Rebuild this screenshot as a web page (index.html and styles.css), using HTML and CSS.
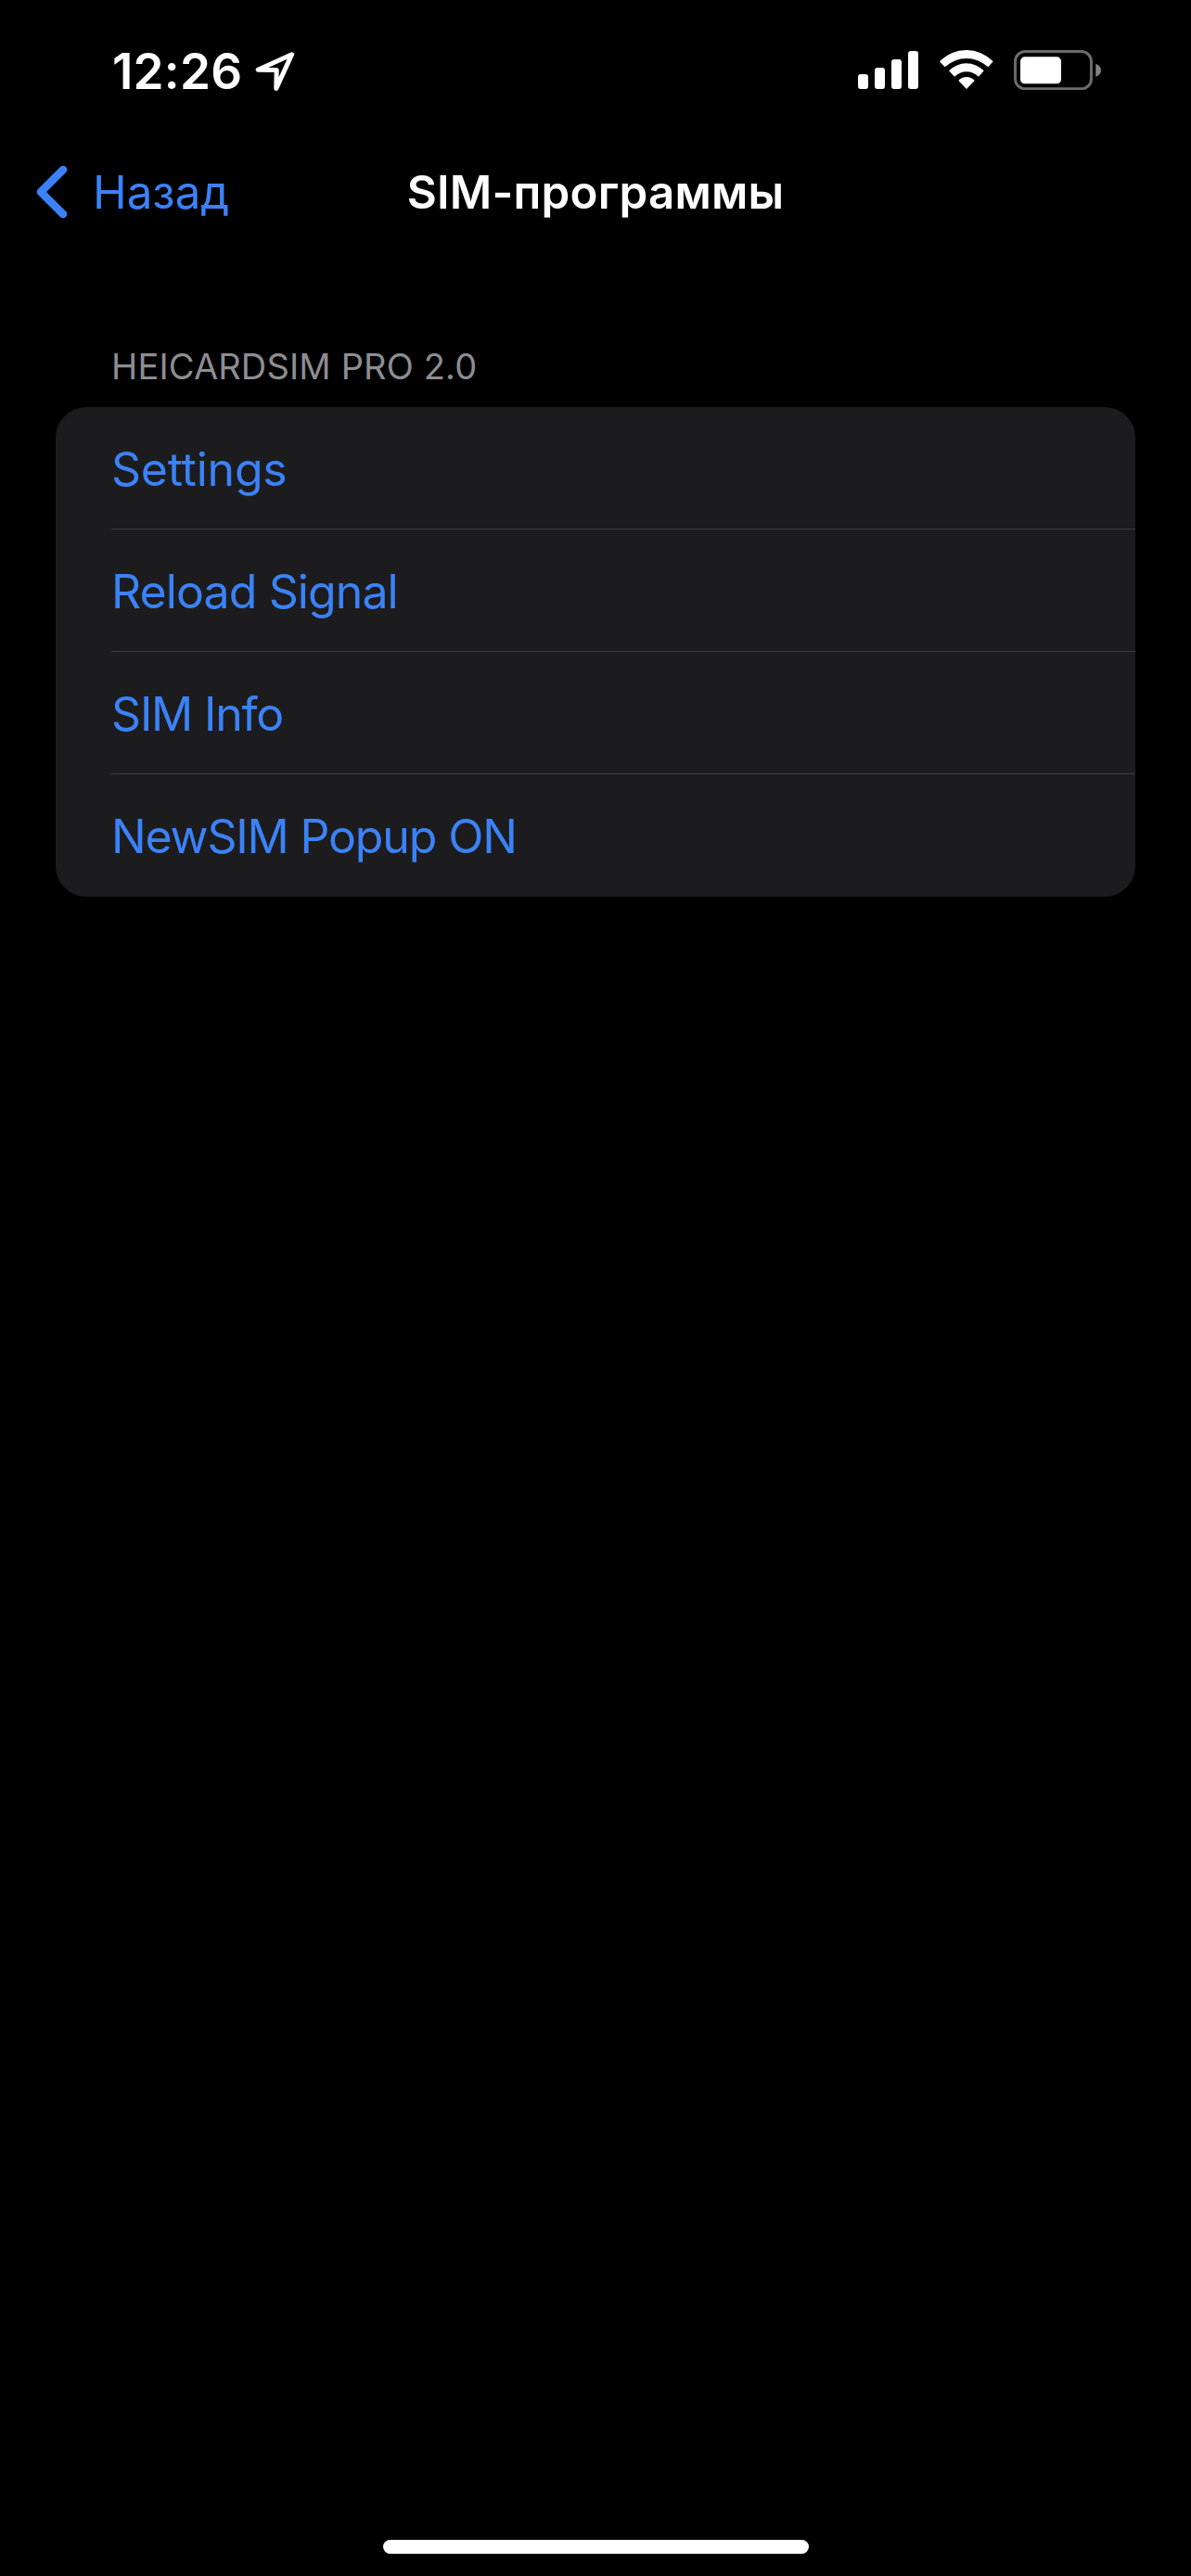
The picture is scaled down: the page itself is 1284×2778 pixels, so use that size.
FILE: index.html
```html
<!DOCTYPE html>
<html lang="ru">
<head>
    <meta charset="UTF-8">
    <meta name="viewport" content="width=device-width, initial-scale=1.0">
    <title>SIM-программы</title>
    <link rel="stylesheet" href="styles.css">
</head>
<body>

    <div class="status-bar">
        <div class="status-left">
            <span class="time">12:26</span>
            <svg class="location" viewBox="275 55 43 44" width="43" height="44">
                <path d="M314.6 58.8 L278.2 75.2 L298.2 75.4 L297.8 95.4 Z"/>
            </svg>
        </div>
        <div class="status-right">
            <svg class="signal" viewBox="0 0 65 41" width="65" height="41">
                <rect x="0" y="25" width="11" height="16" rx="3"/>
                <rect x="18" y="18" width="11" height="23" rx="3"/>
                <rect x="36" y="9" width="11" height="32" rx="3"/>
                <rect x="54" y="0" width="11" height="41" rx="3"/>
            </svg>
            <svg class="wifi" viewBox="338 72 174 126" width="58" height="42">
                <path d="M338 109 A119.6 119.6 0 0 1 511 109 L495 127 A101.5 101.5 0 0 0 355 127 Z"/>
                <path d="M368 139 A78.5 78.5 0 0 1 481 139 L464 158 A55.5 55.5 0 0 0 386 158 Z"/>
                <path d="M399 171 A34 34 0 0 1 451 171 L425 198 Z"/>
            </svg>
            <svg class="battery" viewBox="579 71 282 130" width="94" height="43.3">
                <rect class="battery-case" x="583.5" y="75.5" width="246" height="121" rx="32"/>
                <rect class="battery-level" x="600" y="93" width="132" height="87" rx="14"/>
                <path class="battery-tip" d="M844 115 Q861 122 861 136 Q861 150 844 158 Z"/>
            </svg>
        </div>
    </div>

    <div class="nav-bar">
        <a href="#" class="back">
            <svg class="chevron" viewBox="0 0 34 58" width="34" height="58">
                <path d="M29 5 L5 29 L29 53"/>
            </svg>
            <span class="back-text">Назад</span>
        </a>
        <h1 class="title">SIM-программы</h1>
    </div>

    <main class="content">
        <h2 class="section-title">HEICARDSIM PRO 2.0</h2>
        <ul class="list">
            <li class="row settings">Settings</li>
            <li class="row reload">Reload Signal</li>
            <li class="row info">SIM Info</li>
            <li class="row popup">NewSIM Popup ON</li>
        </ul>
    </main>

    <div class="home-bar"></div>

</body>
</html>
```
FILE: styles.css
```css
* {
    box-sizing: border-box;
}

body {
    margin: 0;
    height: 2778px;
    display: flex;
    flex-direction: column;
    background-color: #000;
    color: #fff;
    font-family: Inter, "Liberation Sans", sans-serif;
}

.status-bar {
    height: 151px;
    padding: 0 97px 0 121px;
    display: flex;
    align-items: center;
    justify-content: space-between;
}

.status-left,
.status-right {
    display: flex;
    align-items: center;
}

.time {
    width: 154px;
    padding-top: 2px;
    font-size: 53px;
    font-weight: 600;
    letter-spacing: 0.2px;
    line-height: 64px;
}

.location {
    margin-top: 3px;
    fill: none;
    stroke: #fff;
    stroke-width: 5;
    stroke-linejoin: round;
}

.signal,
.wifi {
    fill: #fff;
}

.wifi {
    margin-left: 23px;
}

.battery {
    margin-left: 22px;
}

.battery-case {
    fill: none;
    stroke: #6b6b6b;
    stroke-width: 9;
}

.battery-level {
    fill: #fff;
}

.battery-tip {
    fill: #848484;
}

.nav-bar {
    height: 112px;
    padding: 0 39px;
    display: grid;
    grid-template-columns: 1fr auto 1fr;
    align-items: center;
}

.back {
    display: flex;
    align-items: center;
    color: #3b82f7;
    text-decoration: none;
}

.chevron {
    fill: none;
    stroke: #3b82f7;
    stroke-width: 8.5;
    stroke-linecap: round;
    stroke-linejoin: round;
}

.back-text {
    margin-left: 27px;
    font-size: 49.3px;
    line-height: 60px;
}

.title {
    margin: 0;
    font-size: 49.3px;
    font-weight: 600;
    letter-spacing: 0.2px;
    line-height: 60px;
}

.content {
    padding: 109px 60px 0;
}

.section-title {
    margin: 0 0 21px;
    padding-left: 60px;
    color: #8d8d92;
    font-size: 38px;
    font-weight: 400;
    letter-spacing: 0.15px;
    line-height: 46px;
}

.list {
    margin: 0;
    padding: 0 0 0 60px;
    list-style: none;
    background-color: #1c1c1e;
    border-radius: 33px;
}

.row {
    height: 132px;
    border-bottom: 1px solid #3c3c3f;
    color: #3b82f7;
    font-size: 50px;
    line-height: 134px;
}

.row:last-child {
    border-bottom: none;
}

.settings {
    letter-spacing: -0.25px;
}

.reload {
    letter-spacing: -0.9px;
}

.info {
    letter-spacing: -1.2px;
}

.popup {
    letter-spacing: -1.15px;
}

.home-bar {
    width: 459px;
    height: 15px;
    margin: auto auto 24px;
    border-radius: 8px;
    background-color: #fff;
}
```
